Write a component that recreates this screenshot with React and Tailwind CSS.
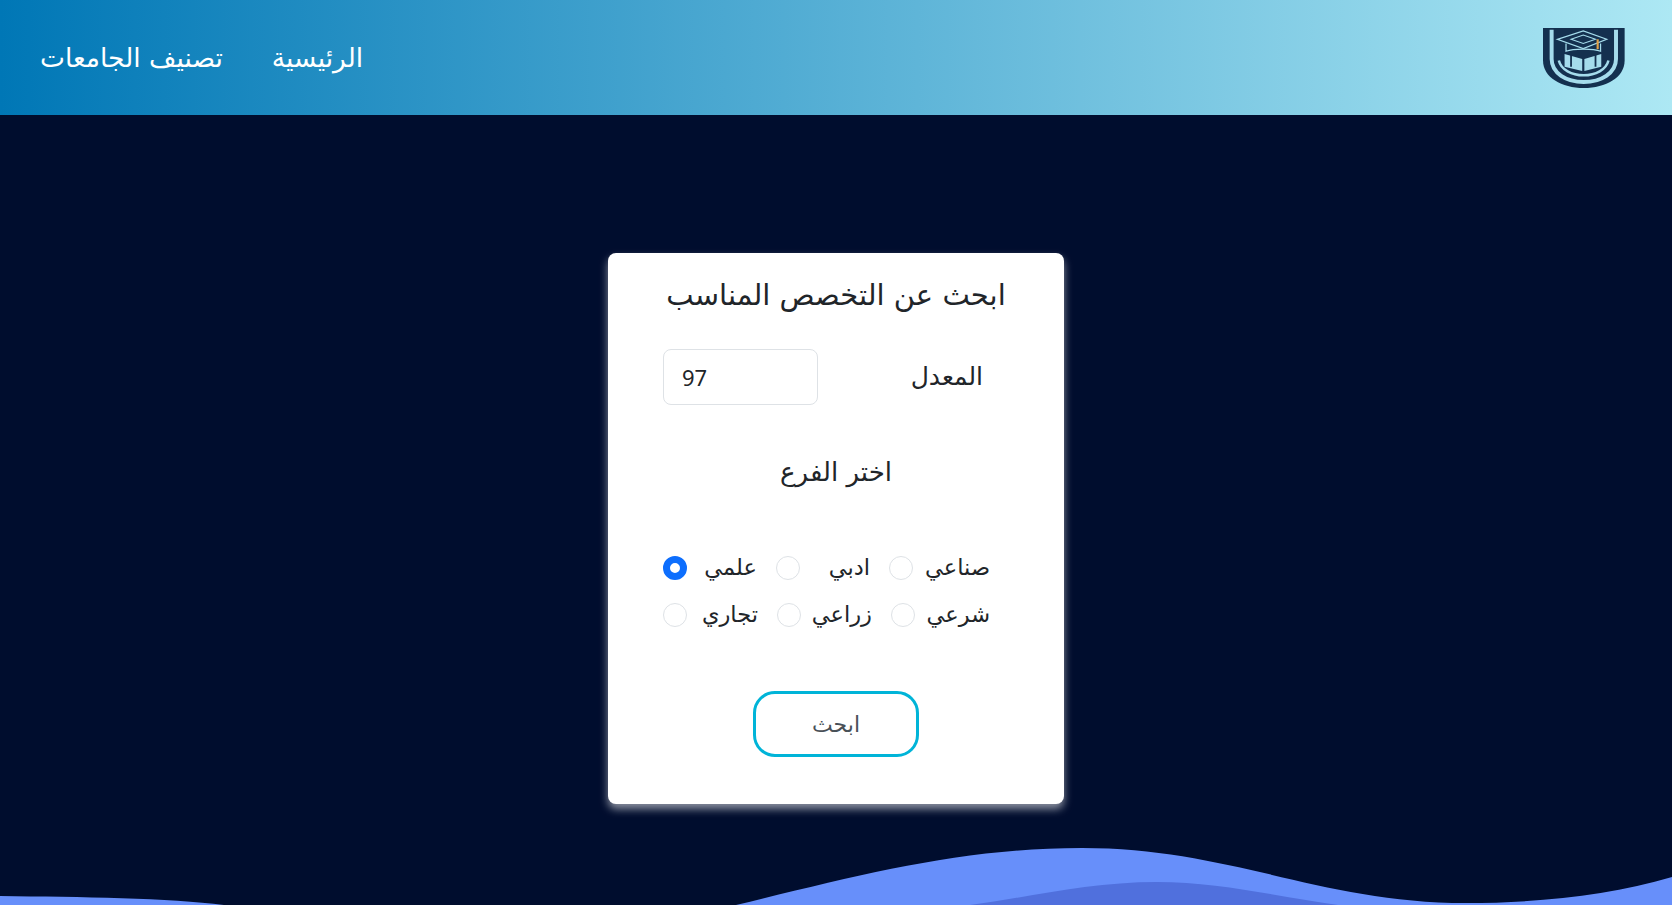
import { useState } from 'react';

const rows = [
    { cols: 'grid-cols-[94px_94px_1fr]', names: ['علمي', 'ادبي', 'صناعي'] },
    { cols: 'grid-cols-[95px_95px_1fr]', names: ['تجاري', 'زراعي', 'شرعي'] },
];

function Logo() {
    return (
        <svg width="82" height="60" viewBox="0 0 228 170" preserveAspectRatio="none" fill="none">
            <path d="M0 0H227V92C227 140 175 170 113 170C52 170 0 140 0 92Z" fill="#14304f" />
            <path d="M24 5V88C24 128 65 153 113 153C161 153 203 128 203 88V5" stroke="#a5dcec" strokeWidth="11" />
            <path d="M44 92C50 118 80 134 113 134C146 134 176 118 182 92" stroke="#a5dcec" strokeWidth="7" />
            <path d="M40 32L112 8L177 32L112 58Z" stroke="#a5dcec" strokeWidth="3.5" />
            <path d="M78 32L112 20L146 32L112 44Z" stroke="#a5dcec" strokeWidth="3" />
            <path d="M64 44V66C85 58 140 58 160 66V44" stroke="#a5dcec" strokeWidth="3.5" />
            <path d="M60 74V110L109 122V88Z" fill="#a5dcec" />
            <path d="M162 74V110L115 122V88Z" fill="#a5dcec" />
            <path d="M78 76V110M146 76V110" stroke="#14304f" strokeWidth="5" />
            <path d="M152 32V60" stroke="#e0a048" strokeWidth="6" />
        </svg>
    );
}

export default function App() {
    const [branch, setBranch] = useState('علمي');

    return (
        <div className="relative h-screen overflow-hidden bg-[#000d2e] font-['DejaVu_Sans',sans-serif]">
            <header className="flex h-[115px] items-center justify-between bg-linear-to-r/srgb from-[#0077b6] to-[#ade8f4] pl-10 pr-[47px]">
                <nav className="flex items-center gap-[49px] text-[26.5px] text-white">
                    <a href="#">تصنيف الجامعات</a>
                    <a href="#">الرئيسية</a>
                </nav>
                <Logo />
            </header>

            <main className="flex justify-center pt-[138px]">
                <form className="relative z-10 flex h-[551px] w-[456px] flex-col items-center rounded-lg bg-white px-[55px] shadow-[0_5px_8px_rgba(255,255,255,0.55)]">
                    <h1 className="mt-[20px] text-[29px] leading-[44px] text-[#212529]">ابحث عن التخصص المناسب</h1>

                    <div className="mt-[32px] flex w-full items-center justify-between pr-[26px]">
                        <input
                            type="text"
                            defaultValue="97"
                            className="h-[56px] w-[155px] rounded-lg border border-[#dee2e6] px-[18px] font-['Noto_Sans',sans-serif] text-[22px] text-[#212529] outline-none"
                        />
                        <label className="text-[25px] text-[#212529]">المعدل</label>
                    </div>

                    <h2 className="mt-[45px] text-[26px] leading-[44px] text-[#212529]">اختر الفرع</h2>

                    <div className="mt-[61px] flex w-full flex-col gap-[21px] pr-[19px]">
                        {rows.map((row) => (
                            <div key={row.names[0]} className={`grid items-center gap-x-[19px] ${row.cols}`}>
                                {row.names.map((name) => (
                                    <label key={name} className="flex h-[26px] items-center justify-between text-[22.5px] text-[#212529]">
                                        <input
                                            type="radio"
                                            name="branch"
                                            checked={branch === name}
                                            onChange={() => setBranch(name)}
                                            className="h-6 w-6 appearance-none rounded-full border border-[#dee2e6] bg-white checked:border-[7px] checked:border-[#0d6efd]"
                                        />
                                        <span>{name}</span>
                                    </label>
                                ))}
                            </div>
                        ))}
                    </div>

                    <button
                        type="button"
                        className="mt-[63px] h-[66px] w-[166px] rounded-[22px] border-[3px] border-[#00b4d8] bg-white text-[22px] text-[#495057]"
                    >
                        ابحث
                    </button>
                </form>
            </main>

            <svg className="absolute bottom-0 left-0" width="1672" height="60" viewBox="0 0 1672 60" fill="none">
                <path d="M0 51C80 52 170 53 224 60H0Z" fill="#678ffa" />
                <path d="M736 60C860 30 960 3 1082 3C1230 3 1320 58 1466 58C1540 58 1610 50 1672 32V60Z" fill="#678ffa" />
                <path d="M970 60C1030 52 1090 37 1157 37C1220 37 1280 52 1338 60Z" fill="#5070dd" />
            </svg>
        </div>
    );
}
